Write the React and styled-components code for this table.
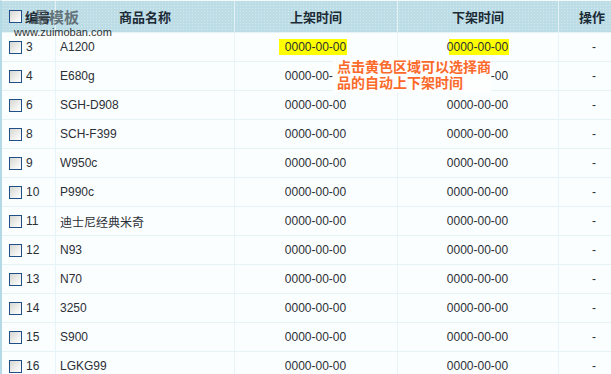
import React from 'react';
import styled, { createGlobalStyle } from 'styled-components';

const GlobalStyle = createGlobalStyle`
    html, body {
        margin: 0;
        padding: 0;
        background: #fff;
        overflow: hidden;
    }
`

const COLS = '54px 179px 163px 161px 1fr';

const Table = styled.div`
    position: relative;
    width: 611px;
    height: 374px;
    box-sizing: border-box;
    border-left: 2px solid #b3d9e5;
    border-top: 1px solid #f2fafc;
    background: #fbfefe;
    font-family: "Liberation Sans", Arial, "Noto Sans CJK SC", sans-serif;
    font-size: 12px;
    color: #2b2f36;
    overflow: hidden;
`

const HeaderRow = styled.div`
    display: grid;
    grid-template-columns: ${COLS};
    height: 31px;
    background-color: #bcdde6;
    background-image: radial-gradient(circle, rgba(255,255,255,0.35) 0.6px, transparent 0.8px);
    background-size: 3px 3px;
`

const HeadCell = styled.div`
    display: flex;
    align-items: center;
    justify-content: ${p => p.$align || 'center'};
    padding: ${p => p.$align === 'flex-start' ? '0 0 0 7px' : '0'};
    border-right: 1px solid #e4f2f6;
    font-family: "Noto Sans CJK SC", sans-serif;
    font-weight: 700;
    font-size: 13px;
    color: #1c2b36;
    gap: 3px;
    &:last-child { border-right: none; padding-left: 20px; justify-content: flex-start; }
`

const Row = styled.div`
    display: grid;
    grid-template-columns: ${COLS};
    height: 29px;
    box-sizing: border-box;
    border-top: 1px solid #e6f3f6;
`

const Cell = styled.div`
    display: flex;
    align-items: center;
    justify-content: ${p => p.$align || 'center'};
    padding-left: ${p => p.$pad || 0}px;
    border-right: 1px solid #e8f4f7;
    gap: 4px;
    white-space: nowrap;
    font-family: ${p => p.$cjk ? '"Noto Sans CJK SC", sans-serif' : '"Liberation Sans", Arial, sans-serif'};
    &:last-child { border-right: none; justify-content: flex-start; padding-left: 33px; }
`

const Check = styled.span`
    display: inline-block;
    width: 13px;
    height: 13px;
    box-sizing: border-box;
    border: 1px solid #1f4f86;
    background: linear-gradient(135deg, #d6d6d2 0%, #f0f0ee 60%, #ffffff 100%);
    flex: none;
`

const DateText = styled.span`
    padding: 1px 1px 1px 0;
    background: ${p => p.$hl === 'full' ? '#ffff00' : p.$hl === 'tail' ? 'linear-gradient(to right, transparent 2px, #ffff00 2px)' : 'transparent'};
    margin-left: ${p => p.$hl === 'full' ? '-6px' : '0'};
    padding-left: ${p => p.$hl === 'full' ? '6px' : '0'};
`

const Watermark = styled.div`
    position: absolute;
    left: 32px;
    top: 5px;
    font-family: "Noto Sans CJK SC", sans-serif;
    font-weight: 700;
    font-size: 15px;
    color: rgba(70, 80, 85, 0.75);
    letter-spacing: 0;
`

const WatermarkUrl = styled.div`
    position: absolute;
    left: 12px;
    top: 25px;
    font-family: "Liberation Sans", Arial, sans-serif;
    font-size: 11px;
    color: #333;
`

const Tip = styled.div`
    position: absolute;
    left: 331px;
    top: 56px;
    width: 158px;
    height: 35px;
    background: #fdfefe;
    box-sizing: border-box;
    padding: 1px 0 0 4px;
    font-family: "Noto Sans CJK SC", sans-serif;
    font-weight: 700;
    font-size: 14px;
    line-height: 16px;
    color: #fb6a2a;
`

const rows = [
    { id: 3, name: 'A1200' },
    { id: 4, name: 'E680g' },
    { id: 6, name: 'SGH-D908' },
    { id: 8, name: 'SCH-F399' },
    { id: 9, name: 'W950c' },
    { id: 10, name: 'P990c' },
    { id: 11, name: '迪士尼经典米奇' },
    { id: 12, name: 'N93' },
    { id: 13, name: 'N70' },
    { id: 14, name: '3250' },
    { id: 15, name: 'S900' },
    { id: 16, name: 'LGKG99' },
]

export default function App() {
    return (
        <>
            <GlobalStyle />
            <Table>
                <HeaderRow>
                    <HeadCell $align="flex-start"><Check />编号</HeadCell>
                    <HeadCell>商品名称</HeadCell>
                    <HeadCell>上架时间</HeadCell>
                    <HeadCell>下架时间</HeadCell>
                    <HeadCell>操作</HeadCell>
                </HeaderRow>
                {rows.map((r, i) => (
                    <Row key={r.id}>
                        <Cell $align="flex-start" $pad={7}><Check />{r.id}</Cell>
                        <Cell $align="flex-start" $pad={4} $cjk={/[^\x00-\x7f]/.test(r.name)}>{r.name}</Cell>
                        <Cell><DateText $hl={i === 0 ? 'full' : ''}>0000-00-00</DateText></Cell>
                        <Cell><DateText $hl={i === 0 ? 'tail' : ''}>0000-00-00</DateText></Cell>
                        <Cell>-</Cell>
                    </Row>
                ))}
                <Watermark>最模板</Watermark>
                <WatermarkUrl>www.zuimoban.com</WatermarkUrl>
                <Tip>点击黄色区域可以选择商<br />品的自动上下架时间</Tip>
            </Table>
        </>
    )
}
